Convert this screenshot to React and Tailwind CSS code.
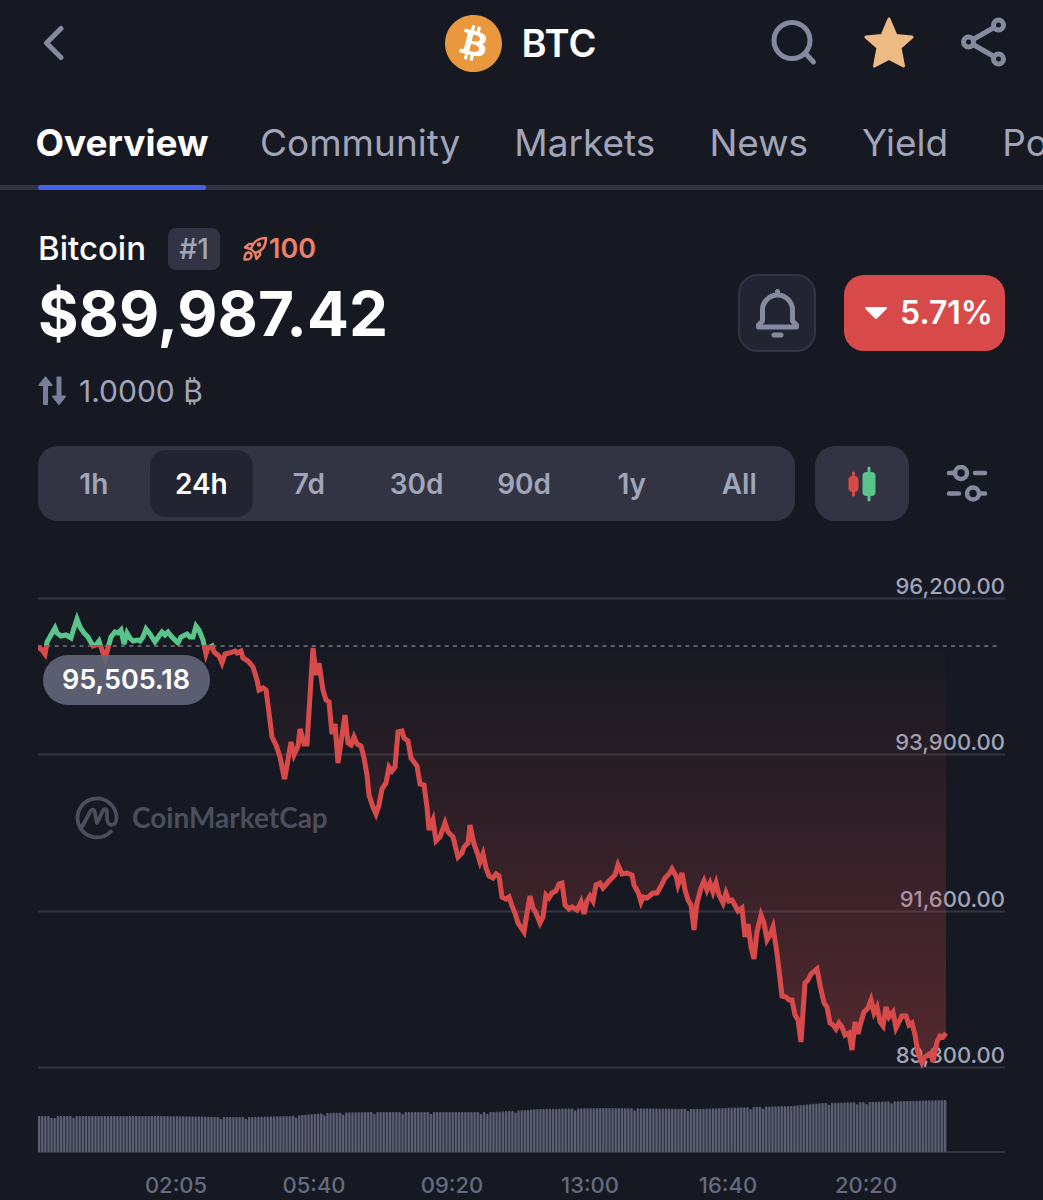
import React, { useState } from "react";
import classNames from "clsx";
import { SiBitcoin } from "react-icons/si";

const TABS = ["Overview", "Community", "Markets", "News", "Yield", "Posts"];
const RANGES = ["1h", "24h", "7d", "30d", "90d", "1y", "All"];

const GRID = [
  { y: 38, label: "96,200.00" },
  { y: 194, label: "93,900.00" },
  { y: 351, label: "91,600.00" },
  { y: 507, label: "89,300.00" }
];

const TIMES = [
  { x: 138, label: "02:05" },
  { x: 276, label: "05:40" },
  { x: 414, label: "09:20" },
  { x: 552, label: "13:00" },
  { x: 690, label: "16:40" },
  { x: 828, label: "20:20" }
];

// y of the opening price, the line is green above and red below
const OPEN_Y = 86;
const VOLUME_Y = 592;

const LINE =
  "0,87 4,90 7,94 9,82 13,75 17,68 19,73 23,76 28,75 33,78 36,68 39,59 42,67 46,73 50,77 55,86 58,85 61,81 63,87 67,99 70,88 73,77 77,72 80,73 83,70 86,84 89,73 92,78 95,81 99,80 102,81 105,77 108,69 112,74 117,82 121,76 124,72 127,75 130,72 134,77 140,83 143,77 149,74 152,77 155,77 158,66 161,70 165,80 168,94 170,88 174,86 176,92 181,96 184,103 187,94 191,93 197,91 199,93 203,91 205,98 210,101 215,107 219,120 221,130 225,128 228,130 230,145 234,177 238,185 242,197 246,217 247,217 253,182 256,195 260,186 262,169 266,184 269,184 275,88 278,115 281,103 285,130 288,140 291,142 294,174 297,164 300,203 307,155 310,183 313,185 316,177 319,184 323,186 326,198 329,215 331,235 335,247 338,254 341,245 344,229 348,223 351,207 354,211 357,207 360,172 364,171 366,178 370,181 373,198 379,206 382,224 386,225 389,247 391,270 395,260 398,281 402,277 407,263 410,272 415,277 420,297 424,293 426,287 430,283 432,265 436,284 439,292 442,302 445,294 448,308 451,316 455,318 458,314 461,316 464,337 468,339 471,337 474,346 477,353 480,363 486,372 489,353 492,336 495,348 498,353 502,363 505,357 508,335 511,338 514,333 518,331 521,324 524,323 527,345 531,349 534,347 539,350 543,342 546,354 549,341 552,336 555,341 558,325 562,323 565,328 571,321 577,315 580,305 584,314 589,313 594,315 596,325 600,332 603,342 605,337 609,338 615,333 619,333 623,326 627,318 631,314 634,309 638,316 640,325 644,313 647,330 650,340 653,345 656,370 659,343 663,328 666,321 669,330 672,323 675,332 678,323 681,335 685,343 688,333 691,341 694,340 700,351 704,348 707,377 710,364 713,387 716,399 719,372 723,355 726,363 729,380 732,375 735,367 739,393 744,436 748,437 751,440 754,440 757,455 760,460 763,482 767,423 770,420 773,414 779,409 782,425 786,443 789,447 792,463 795,465 798,469 801,463 804,467 807,475 811,473 814,490 817,462 820,474 823,462 826,452 830,448 833,440 836,453 839,447 842,462 845,466 848,447 851,457 855,452 858,468 864,456 868,456 871,465 874,463 877,475 880,493 884,503 887,497 893,493 895,502 899,482 902,476 905,477 908,473";

// [bar index, height], heights between these are interpolated
const VOLUME = [[0, 36], [40, 36], [58, 35], [68, 35], [80, 36], [92, 39], [105, 40], [145, 40], [160, 43], [180, 44], [210, 43], [228, 45], [240, 46], [250, 49], [265, 50], [289, 52]];
const DIPS = [4, 5, 11, 58, 66, 82, 91, 97, 107, 116, 125, 141, 143, 152, 171, 190, 207, 227, 231, 252, 261, 264, 272];
const BAR_COUNT = 290;
const BAR_STEP = 909 / BAR_COUNT;

function volumeAt(i) {
  const next = Math.max(1, VOLUME.findIndex(([idx]) => idx >= i));
  const [x0, h0] = VOLUME[next - 1];
  const [x1, h1] = VOLUME[next];
  const h = h0 + ((h1 - h0) * (i - x0)) / (x1 - x0);
  return DIPS.includes(i) ? h - 2 : h;
}

function Header() {
  return (
    <header className="grid h-[86px] grid-cols-[1fr_auto_1fr] items-center pl-8 pr-[34px]">
      <button aria-label="Back" className="flex h-12 w-[42px] items-center justify-center text-[#858a9f]">
        <svg width="24" height="36" viewBox="0 0 24 36" fill="none" stroke="currentColor" strokeWidth="5" strokeLinecap="round" strokeLinejoin="round">
          <path d="M20 3.500 5.500 18 20 32.500" />
        </svg>
      </button>
      <div className="flex items-center gap-5">
        <span className="rounded-full bg-[radial-gradient(circle,white_60%,transparent_61%)] text-[#e9983e]">
          <SiBitcoin size={57} />
        </span>
        <h1 className="text-[38px] font-semibold text-white">BTC</h1>
      </div>
      <div className="flex items-center justify-end gap-[45px] text-[#858a9f]">
        <button aria-label="Search">
          <svg width="50" height="52" viewBox="0 0 50 52" fill="none" stroke="currentColor" strokeWidth="5" strokeLinecap="round">
            <circle cx="23" cy="23.500" r="18" />
            <path d="m37 37 7.500 8" />
          </svg>
        </button>
        <button aria-label="Remove from watchlist" className="text-[#edba84]">
          <svg width="50" height="52" viewBox="0 0 50 52" fill="currentColor" stroke="currentColor" strokeWidth="3" strokeLinejoin="round">
            <path d="m25 2 7 16.500 16 1.500L36 30.500 39.500 49 25 41.500 10.500 49 14 30.500 2 20l16-1.500Z" />
          </svg>
        </button>
        <button aria-label="Share">
          <svg width="50" height="52" viewBox="0 0 50 52" fill="none" stroke="currentColor" strokeWidth="5">
            <circle cx="9.500" cy="25" r="5" />
            <circle cx="39.500" cy="8" r="5" />
            <circle cx="39.500" cy="42" r="5" />
            <path d="M14 22.500 35 10.500M14 27.500l21 12" />
          </svg>
        </button>
      </div>
    </header>
  );
}

function Tabs({ active, onSelect }) {
  return (
    <nav className="flex gap-[54px] overflow-hidden border-b-[5px] border-[#323443] pl-[38px] -mb-[5px]">
      {TABS.map(tab => (
        <button
          key={tab}
          onClick={() => onSelect(tab)}
          className={classNames("shrink-0 whitespace-nowrap pt-[35px] pb-5 text-[37px] leading-[44px]", {
            "flex w-[168px] justify-center font-bold text-white": tab === active,
            "text-[#a1a5b9]": tab !== active
          })}
        >
          {tab}
        </button>
      ))}
    </nav>
  );
}

function Summary() {
  return (
    <section>
      <div className="flex h-[42px] items-center gap-[22px]">
        <h2 className="text-[33px] font-medium text-white">Bitcoin</h2>
        <span className="flex h-[42px] w-[52px] items-center justify-center rounded-lg bg-[#323443] text-[28px] font-medium text-[#a1a5b9]">#1</span>
        <span className="flex items-center gap-px text-[27px] font-semibold text-[#ec8168]">
          <svg width="26" height="26" viewBox="0 0 26 26" fill="none" stroke="currentColor" strokeWidth="2.4" strokeLinejoin="round" strokeLinecap="round">
            <path d="M9 13c1.500-6 6.500-11 15-11 0 8.500-4.500 13.500-11 15Z" />
            <path d="M11 8H7L3 11.500l6 1.500M18 15v4l-3.500 4L13 17M2.500 23.500c0-4 .5-7 4-7s4 5 1 6.500c-1.500.600-3 .500-5 .500Z" />
            <circle cx="17" cy="8.500" r="1" fill="currentColor" />
          </svg>
          100
        </span>
      </div>
      <div className="flex h-[86px] items-center">
        <p className="flex-1 text-[62px] font-bold text-white">$89,987.42</p>
        <button aria-label="Price alerts" className="flex h-[78px] w-[78px] items-center justify-center rounded-[20px] border-2 border-[#323443] bg-[#222531] text-[#858a9f]">
          <svg width="48" height="52" viewBox="0 0 48 52" fill="none" stroke="currentColor" strokeWidth="5" strokeLinecap="round" strokeLinejoin="round">
            <path d="M24.500 4.500V8M5.500 40h38v-2l-4-4V23a15 15 0 0 0-30 0v11l-4 4v2Z" />
            <path d="M21 48h7" />
          </svg>
        </button>
        <span className="ml-7 flex h-[76px] w-[161px] items-center justify-end gap-3 rounded-[20px] bg-[#d84a4a] pr-3 text-[32px] font-semibold text-white">
          <svg width="24" height="14" viewBox="0 0 24 14" fill="currentColor" stroke="currentColor" strokeWidth="2" strokeLinejoin="round">
            <path d="M2 2h20L12 12Z" />
          </svg>
          5.71%
        </span>
      </div>
      <div className="mt-[17px] flex h-9 items-center text-[30px] text-[#a1a5b9]">
        <svg className="mr-3" width="29" height="30" viewBox="0 0 29 30" fill="#77809a" stroke="#77809a" strokeWidth="2" strokeLinejoin="round">
          <path d="M7.500 1.500 1.500 9H6v19h3V9h4.500ZM19.500 1.500h3v19h4.500l-6 7.500-6-7.500h4.500Z" />
        </svg>
        1.0000 ₿
      </div>
    </section>
  );
}

function Toolbar({ range, onSelect }) {
  return (
    <div className="mt-[37px] flex h-[75px] gap-5">
      <div className="flex flex-1 gap-1 rounded-[20px] bg-[#323443] p-1">
        {RANGES.map(r => (
          <button
            key={r}
            onClick={() => onSelect(r)}
            className={classNames("flex-1 rounded-2xl text-[28px] font-semibold", {
              "bg-[#222531] text-white": r === range,
              "text-[#a1a5b9]": r !== range
            })}
          >
            {r}
          </button>
        ))}
      </div>
      <button aria-label="Candlestick chart" className="flex w-[94px] items-center justify-center rounded-[20px] bg-[#323443]">
        <svg width="28" height="36" viewBox="0 0 28 36">
          <path d="M5.500 7v22" stroke="#d84a4a" strokeWidth="3" strokeLinecap="round" />
          <rect x="0.500" y="10" width="10" height="16" rx="4" fill="#d84a4a" />
          <path d="M21 2v32" stroke="#5ac58b" strokeWidth="3" strokeLinecap="round" />
          <rect x="14.500" y="6" width="13" height="24" rx="4" fill="#5ac58b" />
        </svg>
      </button>
      <button aria-label="Chart settings" className="flex w-[76px] items-center justify-center text-[#858a9f]">
        <svg width="42" height="38" viewBox="0 0 42 38" fill="none" stroke="currentColor" strokeWidth="4.500" strokeLinecap="round">
          <circle cx="15" cy="8" r="6" />
          <path d="M3 8h5M29 8h10M3 28.500h10M34 28.500h5" />
          <circle cx="27" cy="28.500" r="6" />
        </svg>
      </button>
    </div>
  );
}

function PriceChart() {
  const bars = Array.from({ length: BAR_COUNT }, (_, i) => volumeAt(i));

  return (
    <svg className="mt-[39px] block w-full" viewBox="0 0 967 640" role="img" aria-label="Bitcoin price, last 24 hours">
      <defs>
        <linearGradient id="stroke" gradientUnits="userSpaceOnUse" x1="0" y1="0" x2="0" y2={OPEN_Y * 2}>
          <stop offset="0.495" stopColor="#5ac58b" />
          <stop offset="0.495" stopColor="#d84a4a" />
        </linearGradient>
        <linearGradient id="area" gradientUnits="userSpaceOnUse" x1="0" y1="38" x2="0" y2="507">
          <stop offset="0" stopColor="#5ac58b" stopOpacity="0.150" />
          <stop offset="0.102" stopColor="#5ac58b" stopOpacity="0" />
          <stop offset="0.102" stopColor="#d84a4a" stopOpacity="0" />
          <stop offset="1" stopColor="#d84a4a" stopOpacity="0.320" />
        </linearGradient>
      </defs>

      {/* watermark */}
      <g fill="none" stroke="#4b4e5c" strokeWidth="3.800" strokeLinecap="round" strokeLinejoin="round">
        <path d="M73 271.500A19.500 19.500 0 1 1 78.500 258c0 9-9 9-9.500 1v-6c0-5-3-4.500-4.500-1.500L59 263l-2.500-11.500c-.500-2.500-2.500-2.500-4-.500L44.500 266" />
      </g>
      <text x="94" y="268" className="fill-[#4b4e5c] font-['Lato'] text-[28px] font-bold">CoinMarketCap</text>

      {GRID.map(({ y, label }) => (
        <g key={label}>
          <path d={`M0 ${y + 0.5}H967`} stroke="#323443" strokeWidth="2" />
          <text x="967" y={y - 4} textAnchor="end" className="fill-[#a1a5b9] text-[22px] font-medium">{label}</text>
        </g>
      ))}

      <polygon points={`0,${OPEN_Y} ${LINE} 908,${OPEN_Y}`} fill="url(#area)" />
      <path d={`M0 ${OPEN_Y}H960`} stroke="#5c5f70" strokeWidth="2" strokeDasharray="4 4.300" />
      <polyline points={LINE} fill="none" stroke="url(#stroke)" strokeWidth="5" />

      <rect x="5" y="95" width="167" height="50" rx="25" fill="#626477" fillOpacity="0.920" />
      <text x="88" y="129" textAnchor="middle" className="fill-white text-[27px] font-semibold">95,505.18</text>

      {/* volume */}
      <rect x="0" y={VOLUME_Y - 1} width="967" height="2" fill="#323443" />
      {bars.map((h, i) => (
        <g key={i}>
          <rect x={i * BAR_STEP} y={VOLUME_Y - h + 1} width={BAR_STEP} height={h - 1} fill="#323443" />
          <rect x={i * BAR_STEP} y={VOLUME_Y - h} width="2" height={h} fill="#5d6073" />
        </g>
      ))}

      {TIMES.map(({ x, label }) => (
        <text key={label} x={x} y="633" textAnchor="middle" className="fill-[#646b80] text-[22px] font-medium">{label}</text>
      ))}
    </svg>
  );
}

export default function App() {
  const [tab, setTab] = useState("Overview");
  const [range, setRange] = useState("24h");

  return (
    <div className="min-h-screen overflow-hidden bg-[#171922] font-['Inter',sans-serif]">
      <Header />
      <Tabs active={tab} onSelect={setTab} />
      <div className="relative ml-[38px] h-[5px] w-[168px] rounded-full bg-[#4661ee]" />
      <main className="px-[38px] pt-[38px]">
        <Summary />
        <Toolbar range={range} onSelect={setRange} />
        <PriceChart />
      </main>
    </div>
  );
}
